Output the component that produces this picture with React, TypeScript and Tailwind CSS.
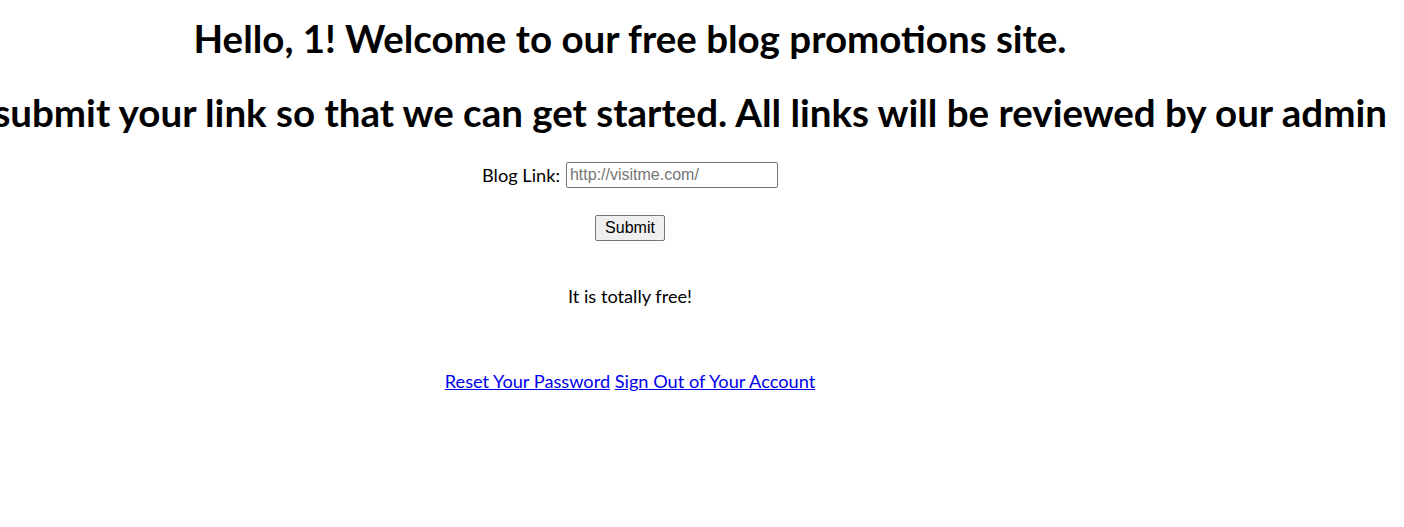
export default function App() {
  return (
    <div className="w-[1260px] flex flex-col items-center text-black font-['Lato',sans-serif] text-[18.2px] leading-[26px]">
      <h1 className="mt-[15px] text-[38.5px] font-bold leading-[46px] whitespace-nowrap">
        Hello, 1! Welcome to our free blog promotions site.
      </h1>
      <h2 className="mt-[28px] text-[38.5px] font-bold leading-[46px] whitespace-nowrap">
        Please submit your link so that we can get started. All links will be reviewed by our admin
      </h2>
      <form className="flex flex-col items-center">
        <div className="mt-[27px] flex items-center h-[26px]">
          <label htmlFor="blog" className="mr-[6px]">Blog Link:</label>
          <input
            id="blog"
            type="text"
            placeholder="http://visitme.com/"
            className="w-[212px] h-[26px] border border-[#767676] rounded-[2px] px-[3px] font-['Liberation_Sans',Arial,sans-serif] text-[16px] placeholder:text-[#757575]"
          />
        </div>
        <button
          type="submit"
          className="mt-[27px] h-[26px] px-[9px] bg-[#efefef] border border-[#767676] rounded-[2px] font-['Liberation_Sans',Arial,sans-serif] text-[16px] leading-none"
        >
          Submit
        </button>
      </form>
      <p className="mt-[42px]">It is totally free!</p>
      <div className="mt-[59px]">
        <a href="#" className="text-[#0000ee] underline">Reset Your Password</a>{" "}
        <a href="#" className="text-[#0000ee] underline">Sign Out of Your Account</a>
      </div>
    </div>
  );
}
